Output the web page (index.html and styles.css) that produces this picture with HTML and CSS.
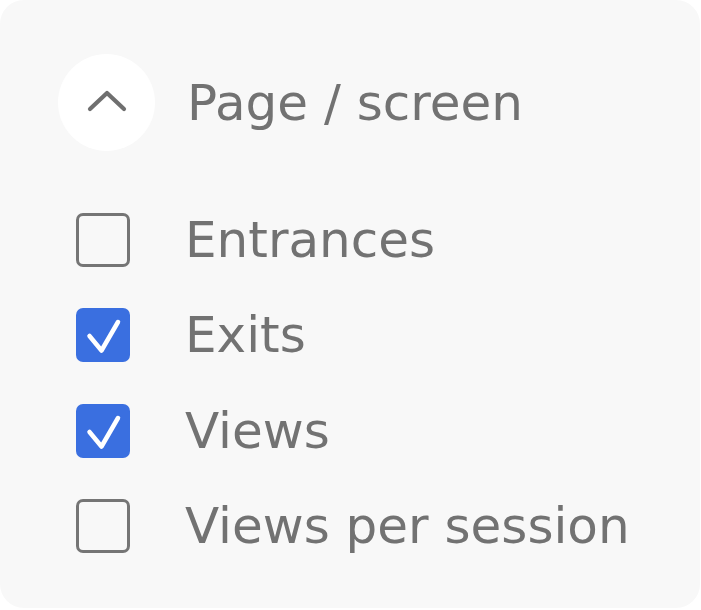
FILE: index.html
```html
<!DOCTYPE html>
<html lang="en">
<head>
<meta charset="utf-8">
<title>Page / screen</title>
<link rel="stylesheet" href="styles.css">
</head>
<body>
<div class="card">
  <div class="header">
    <button class="toggle" aria-label="Collapse">
      <svg width="40" height="22" viewBox="0 0 40 22"><path d="M3 19 L20 3 L37 19" fill="none" stroke="#6f6f6f" stroke-width="4.2" stroke-linecap="round" stroke-linejoin="round"/></svg>
    </button>
    <span class="title">Page / screen</span>
  </div>
  <ul class="list">
    <li class="row"><span class="box"></span><span class="label">Entrances</span></li>
    <li class="row"><span class="box checked"><svg width="54" height="54" viewBox="0 0 54 54"><path d="M13.5 28 L25.5 42.5 L42 14" fill="none" stroke="#fff" stroke-width="4.5" stroke-linecap="round" stroke-linejoin="round"/></svg></span><span class="label">Exits</span></li>
    <li class="row"><span class="box checked"><svg width="54" height="54" viewBox="0 0 54 54"><path d="M13.5 28 L25.5 42.5 L42 14" fill="none" stroke="#fff" stroke-width="4.5" stroke-linecap="round" stroke-linejoin="round"/></svg></span><span class="label">Views</span></li>
    <li class="row"><span class="box"></span><span class="label">Views per session</span></li>
  </ul>
</div>
</body>
</html>
```
FILE: styles.css
```css
html, body {
  margin: 0;
  padding: 0;
  background: #ffffff;
}
body {
  font-family: "DejaVu Sans", Inter, sans-serif;
  color: #727272;
}
.card {
  box-sizing: border-box;
  width: 700px;
  height: 608px;
  background: #f8f8f8;
  border-radius: 24px;
  padding: 54px 0 0 58px;
}
.header {
  display: flex;
  align-items: center;
  gap: 32px;
}
.toggle {
  width: 97px;
  height: 97px;
  border-radius: 50%;
  border: none;
  background: #ffffff;
  display: flex;
  align-items: center;
  justify-content: center;
  padding: 0 0 4px 0;
}
.title {
  font-size: 50px;
}
.list {
  list-style: none;
  margin: 41px 0 0 18px;
  padding: 0;
}
.row {
  height: 95.5px;
  display: flex;
  align-items: center;
  gap: 55px;
}
.box {
  box-sizing: border-box;
  width: 54px;
  height: 54px;
  border: 3px solid #757575;
  border-radius: 7px;
  flex: none;
  display: flex;
}
.box.checked {
  border: none;
  background: #3a6fe0;
}
.label {
  font-size: 50px;
}
```
